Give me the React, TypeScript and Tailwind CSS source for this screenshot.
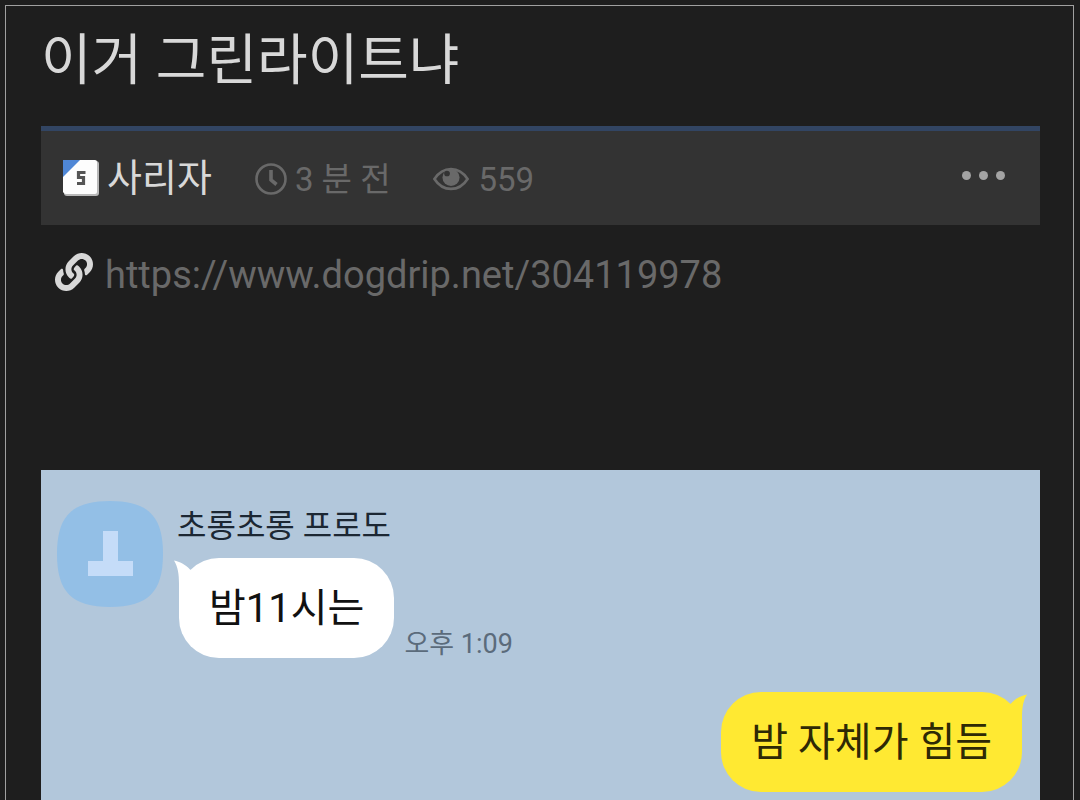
import { FaLink } from "react-icons/fa";

function LevelBadge() {
  return (
    <svg viewBox="0 0 36 36" className="size-9 shrink-0" aria-hidden="true">
      <rect x="1" y="1" width="35" height="35" rx="3" fill="#b9b9b9" />
      <path d="M0 15 16 0H32Q34 0 34 2V32Q34 34 32 34H3Q1 34 0 32Z" fill="#fdfdfd" />
      <path d="M0 0H17L0 17Z" fill="#4f87d6" />
      <path d="M22.500 12.500H15.500V17.500H20.500V23.500H14" fill="none" stroke="#555" strokeWidth="3.200" />
    </svg>
  );
}

function ClockIcon() {
  return (
    <svg viewBox="0 0 32 32" className="size-8 shrink-0" fill="none" stroke="currentColor" aria-hidden="true">
      <circle cx="16" cy="16" r="14.500" strokeWidth="2.600" />
      <path d="M16 7V17L21.500 21.500" strokeWidth="3.600" />
    </svg>
  );
}

function EyeIcon() {
  return (
    <svg viewBox="0 0 38 24" className="h-6 w-9 shrink-0" aria-hidden="true">
      <path
        d="M1.500 12C6 5 12 1.500 19 1.500S32 5 36.500 12C32 19 26 22.500 19 22.500S6 19 1.500 12Z"
        fill="none"
        stroke="currentColor"
        strokeWidth="2.800"
      />
      <circle cx="19" cy="10.500" r="9" fill="currentColor" />
      <circle cx="14.800" cy="6.200" r="3" fill="#333333" />
    </svg>
  );
}

function Avatar() {
  return (
    <svg viewBox="0 0 106 106" className="size-[106px] shrink-0" role="img" aria-label="프로필">
      <path d="M53 0C91 0 106 15 106 53S91 106 53 106S0 91 0 53S15 0 53 0Z" fill="#93bfe6" />
      <path d="M46 30H61V60H76V75H31V60H46Z" fill="#c5dcf8" />
    </svg>
  );
}

function Tail({ side }: { side: "left" | "right" }) {
  return (
    <svg
      viewBox="0 0 24 40"
      className={
        side === "left"
          ? "absolute top-0.5 -left-[5px] h-10 w-6 text-white"
          : "absolute top-0.5 -right-[5px] h-10 w-6 -scale-x-100 text-[#ffe932]"
      }
      aria-hidden="true"
    >
      <path d="M0 0.500C6 2 11 4 16 9.500L24 14V40H5V24C5 14 4 7 0 0.500Z" fill="currentColor" />
    </svg>
  );
}

export default function App() {
  return (
    <div className="flex min-h-screen flex-col bg-[#1e1e1e] px-[5px] pt-[5px] font-[Roboto,'Noto_Sans_CJK_KR',sans-serif]">
      <main className="mr-px flex grow flex-col border border-b-0 border-[#a0a0a0] pr-[33px] pl-[35px]">
        <h1 className="pt-5 text-[55px] leading-[68px] text-[#d8d8d8]">이거 그린라이트냐</h1>

        <div className="mt-8 flex h-[99px] items-center border-t-[5px] border-[#324563] bg-[#333333] pr-[35px] pl-[22px] text-[#696969]">
          <a href="#author" className="flex items-center gap-2 text-[38px] leading-[48px] text-[#d8d8d8]">
            <LevelBadge />
            사리자
          </a>
          <span className="ml-[43px] flex items-center gap-2 pt-0.5 text-[33px] leading-[48px]">
            <ClockIcon />
            <span className="pt-0.5">3 분 전</span>
          </span>
          <span className="ml-[42px] flex items-center gap-2.5 pt-0.5 text-[33px] leading-[48px]">
            <EyeIcon />
            <span className="pt-0.5">559</span>
          </span>
          <button type="button" aria-label="더보기" className="mb-1.5 ml-auto flex gap-2">
            <span className="size-[9px] rounded-full bg-[#a3a3a3]" />
            <span className="size-[9px] rounded-full bg-[#a3a3a3]" />
            <span className="size-[9px] rounded-full bg-[#a3a3a3]" />
          </button>
        </div>

        <div className="flex items-start gap-3 pt-7 pl-3.5">
          <FaLink className="size-[38px] shrink-0 text-[#d8d8d8]" aria-hidden="true" />
          <a href="https://www.dogdrip.net/304119978" className="text-[38px] leading-[44px] text-[#696969]">
            https://www.dogdrip.net/304119978
          </a>
        </div>

        <section aria-label="대화" className="mt-[173px] flex grow flex-col bg-[#b2c7db] pr-[18px] pl-4">
          <div className="flex gap-4 pt-[31px]">
            <Avatar />
            <div>
              <p className="-ml-0.5 pt-[5px] text-[32px] leading-10 text-[#1c2733]">초롱초롱 프로도</p>
              <div className="mt-3 flex items-end gap-2.5">
                <p className="relative rounded-[40px] bg-white px-[30px] pt-[27px] pb-[25px] text-[40px] leading-[48px] text-[#111111]">
                  <Tail side="left" />
                  밤11시는
                </p>
                <time className="text-[27px] leading-7 text-[#5b6b7b]">오후 1:09</time>
              </div>
            </div>
          </div>
          <div className="mt-[34px] flex justify-end">
            <p className="relative rounded-[40px] bg-[#ffe932] px-[30px] pt-[27px] pb-[25px] text-[40px] leading-[48px] text-[#2e2905]">
              <Tail side="right" />
              밤 자체가 힘듬
            </p>
          </div>
        </section>
      </main>
    </div>
  );
}
